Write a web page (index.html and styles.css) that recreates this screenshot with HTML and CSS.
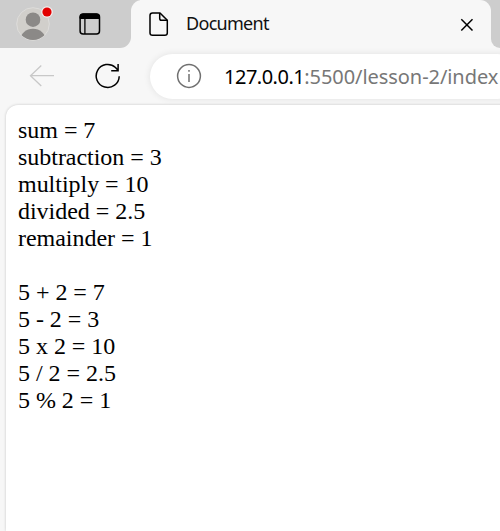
FILE: index.html
```html
<!DOCTYPE html>
<html lang="en">
<head>
<meta charset="utf-8">
<title>Document</title>
<link rel="stylesheet" href="styles.css">
</head>
<body>
<div class="browser">
  <header class="tabs">
    <div class="tabs-left">
      <svg class="avatar" width="38" height="36" viewBox="0 0 38 36">
        <defs><clipPath id="face"><circle cx="17" cy="18" r="16"/></clipPath></defs>
        <circle cx="17" cy="18" r="16.3" fill="#d1cfcb" stroke="#dedddb" stroke-width="1"/>
        <g clip-path="url(#face)" fill="#8b8987"><circle cx="17" cy="13.7" r="7.3"/><ellipse cx="17" cy="34" rx="12.6" ry="11.2"/></g>
        <circle cx="31" cy="6" r="5.8" fill="#f4eeee"/>
        <circle cx="31" cy="6" r="4.6" fill="#e20000"/>
      </svg>
      <svg class="panel" width="22" height="22" viewBox="0 0 22 22" fill="none" stroke="#000">
        <rect x="1.1" y="1.1" width="19.4" height="19.8" rx="3" stroke-width="1.5"/>
        <path d="M1 5.500V4Q1 1 4 1H17.500Q20.500 1 20.500 4V5.500Z" fill="#000"/>
        <path d="M5.900 6V21" stroke-width="1.300"/>
      </svg>
    </div>
    <div class="tab">
      <svg class="doc" width="20" height="26" viewBox="0 0 20 26" fill="none" stroke="#000" stroke-width="1.5" stroke-linejoin="round">
        <path d="M3.500 1H11L18.300 8.300V21Q18.300 23.300 15.800 23.300H3.500Q1 23.300 1 21V3.500Q1 1 3.500 1Z"/>
        <path d="M10.700 1V6.500Q10.700 8.300 12.500 8.300H18.300"/>
      </svg>
      <span class="title">Document</span>
      <svg class="close" width="14" height="14" viewBox="0 0 14 14" stroke="#000" stroke-width="1.5"><path d="M1.300 1.300L12.500 12.500M12.500 1.300L1.300 12.500"/></svg>
    </div>
    <div class="tabs-right"></div>
  </header>
  <nav class="toolbar">
    <svg class="back" width="26" height="24" viewBox="0 0 26 24" fill="none" stroke="#c8c8c8" stroke-width="1.3"><path d="M12.300 1.500L1.500 11.700L12.300 22M1.500 11.700H25"/></svg>
    <svg class="reload" width="26" height="26" viewBox="0 0 26 26" fill="none" stroke="#000" stroke-width="1.500"><path d="M24.200 13.200A11.500 11.500 0 1 1 20.500 4.500L23 7.300M23.100 1V7.700H16.200"/></svg>
    <div class="address">
      <svg class="info" width="26" height="26" viewBox="0 0 26 26" fill="none" stroke="#707070" stroke-width="1.500"><circle cx="13" cy="13" r="11.400"/><path d="M13 11V19M13 7V8.700"/></svg>
      <span class="url"><span class="host">127.0.0.1</span><span class="path">:5500/lesson-2/index</span></span>
    </div>
  </nav>
  <main class="page">sum = 7<br>subtraction = 3<br>multiply = 10<br>divided = 2.5<br>remainder = 1<br><br>5 + 2 = 7<br>5 - 2 = 3<br>5 x 2 = 10<br>5 / 2 = 2.5<br>5 % 2 = 1</main>
</div>
</body>
</html>
```
FILE: styles.css
```css
* { box-sizing: border-box; }
body { margin: 0; overflow: hidden; }
svg { display: block; flex: none; }
.browser {
  width: 500px;
  height: 531px;
  overflow: hidden;
  display: flex;
  flex-direction: column;
  background: #f7f7f7;
  font-family: "Noto Sans", sans-serif;
}
.tabs {
  display: flex;
  flex: none;
  height: 48px;
  background: linear-gradient(#cdcdcd, #cdcdcd) 120px 0 / 20px 36px no-repeat, linear-gradient(#cdcdcd, #cdcdcd) 480px 0 / 20px 36px no-repeat;
}
.tabs-left {
  display: flex;
  width: 131px;
  height: 48px;
  padding: 6px 0 0 16px;
  background: #cdcdcd;
  border-radius: 0 0 11px 0;
}
.panel { margin: 7px 0 0 25px; }
.tab {
  display: flex;
  width: 360px;
  height: 48px;
  background: #f7f7f7;
  border-radius: 11px 11px 0 0;
}
.doc { margin: 12px 0 0 18px; }
.title {
  width: 84px;
  margin: 10px 0 0 17px;
  font-size: 18px;
  line-height: 26px;
  letter-spacing: -.7px;
  white-space: nowrap;
  color: #111;
}
.close { margin: 18px 0 0 190px; }
.tabs-right {
  width: 9px;
  height: 48px;
  background: #cdcdcd;
  border-radius: 0 0 0 11px;
}
.toolbar { display: flex; flex: none; height: 57px; }
.back { margin: 16px 0 0 29px; }
.reload { margin: 15px 0 0 40px; }
.address {
  display: flex;
  flex: none;
  width: 370px;
  height: 45px;
  margin: 6px 0 0 29px;
  padding-left: 26px;
  background: #fff;
  border-radius: 23px;
  box-shadow: 0 0 7px rgba(0, 0, 0, .09);
}
.info { margin-top: 9px; }
.url {
  margin: 8px 0 0 22px;
  font-size: 20px;
  line-height: 30px;
  white-space: nowrap;
}
.host { color: #000; letter-spacing: -.5px; }
.path { color: #777; letter-spacing: -.06px; }
.page {
  flex: 1;
  width: 510px;
  margin-left: 6px;
  padding: 12px 0 0 12px;
  background: #fff;
  border-radius: 12px 0 0 0;
  box-shadow: 0 0 3px rgba(0, 0, 0, .2);
  font: 24px/27px "Liberation Serif", serif;
  letter-spacing: -.03px;
  color: #000;
}
```
